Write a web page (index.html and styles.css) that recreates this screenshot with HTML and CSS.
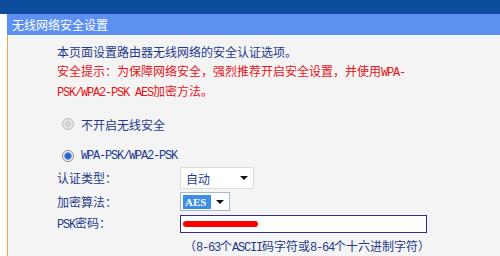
FILE: index.html
```html
<!DOCTYPE html>
<html lang="zh-CN">
  <head>
    <meta charset="UTF-8" />
    <title>无线网络安全设置</title>
    <link rel="stylesheet" href="styles.css">
  </head>
  <body>
    <div class="topbar"></div>
    <div class="panel">
      <div class="panel-title">无线网络安全设置</div>
      <div class="panel-body">
        <p class="intro">本页面设置路由器无线网络的安全认证选项。</p>
        <p class="warning">安全提示：为保障网络安全，强烈推荐开启安全设置，并使用<span class="mono">WPA-</span><br><span class="mono">PSK/WPA2-PSK AES</span>加密方法。</p>

        <div class="option">
          <span class="radio"></span>
          <span>不开启无线安全</span>
        </div>
        <div class="option option-wpa">
          <span class="radio checked"></span>
          <span class="mono">WPA-PSK/WPA2-PSK</span>
        </div>

        <div class="form-grid">
          <label class="row-label">认证类型：</label>
          <div class="select select-auth">
            <span class="select-value">自动</span>
            <span class="select-arrow"></span>
          </div>

          <label class="row-label">加密算法：</label>
          <div class="select select-algo">
            <span class="select-value selected">AES</span>
            <span class="select-arrow"></span>
          </div>

          <label class="row-label"><span class="mono">PSK</span>密码：</label>
          <div class="text-input">
            <span class="redact"></span>
          </div>

          <span></span>
          <div class="hint">（<span class="mono">8-63</span>个<span class="mono">ASCII</span>码字符或<span class="mono">8-64</span>个十六进制字符）</div>
        </div>
      </div>
    </div>
  </body>
</html>
```

FILE: styles.css
```css
* {
  box-sizing: border-box;
}

body {
  margin: 0;
  background: #fff;
  color: #1f3a8c;
  font-family: 'Noto Sans CJK SC', sans-serif;
  font-size: 12px;
  overflow: hidden;
}

p {
  margin: 0;
}

.topbar {
  height: 14px;
  background: #0d4d9d;
}

.panel {
  margin-left: 7px;
}

.panel-title {
  height: 21px;
  line-height: 21px;
  padding-left: 5px;
  background: #5e90f2;
  color: #fff;
}

.panel-body {
  border-left: 1px solid #f2a54a;
  background: #f4f4f4;
  padding: 8px 0 10px 49px;
  height: 230px;
}

.mono {
  font-family: 'Liberation Mono', monospace;
  font-size: 12px;
  letter-spacing: -1.2px;
}

.intro {
  line-height: 18px;
}

.warning {
  margin-top: 1px;
  line-height: 18px;
  color: #e8141a;
}

.option {
  display: flex;
  align-items: center;
  gap: 7px;
  height: 18px;
  margin-top: 13px;
  padding-left: 5px;
}

.option-wpa {
  margin-top: 14px;
}

.radio {
  width: 12px;
  height: 12px;
  border-radius: 50%;
  border: 1px solid #b9b9b9;
  background: radial-gradient(circle, #d4d4d4 0 3px, #eaeaea 4px);
}

.radio.checked {
  border-color: #8a8a8a;
  background: radial-gradient(circle, #2b63c9 0 2.5px, #7aa6e8 3.5px, #fff 4.5px);
}

.form-grid {
  display: grid;
  grid-template-columns: 123px 1fr;
  grid-auto-rows: auto;
  align-items: center;
  row-gap: 3px;
  margin-top: 2px;
}

.row-label {
  line-height: 18px;
}

.select {
  display: flex;
  align-items: center;
  justify-content: space-between;
  background: #fff;
  border: 1px solid #dcdcdc;
}

.select-auth {
  width: 74px;
  height: 22px;
  padding: 0 5px;
}

.select-algo {
  width: 50px;
  height: 19px;
  padding: 0 5px 0 2px;
  border-color: #a9b8cf;
}

.select-value.selected {
  width: 28px;
  background: #3a8ee6;
  color: #fff;
  font-family: 'Liberation Serif', serif;
  font-weight: bold;
  font-size: 11px;
  padding-left: 2px;
  line-height: 14px;
}

.select-arrow {
  width: 0;
  height: 0;
  border-left: 4px solid transparent;
  border-right: 4px solid transparent;
  border-top: 4px solid #111;
}

.text-input {
  display: flex;
  align-items: center;
  width: 247px;
  height: 18px;
  padding-left: 2px;
  background: #fff;
  border: 1px solid #2d2f86;
}

.redact {
  display: block;
  width: 75px;
  height: 6px;
  border-radius: 3px;
  background: #f00;
}

.hint {
  padding-left: 4px;
  line-height: 18px;
}
```
